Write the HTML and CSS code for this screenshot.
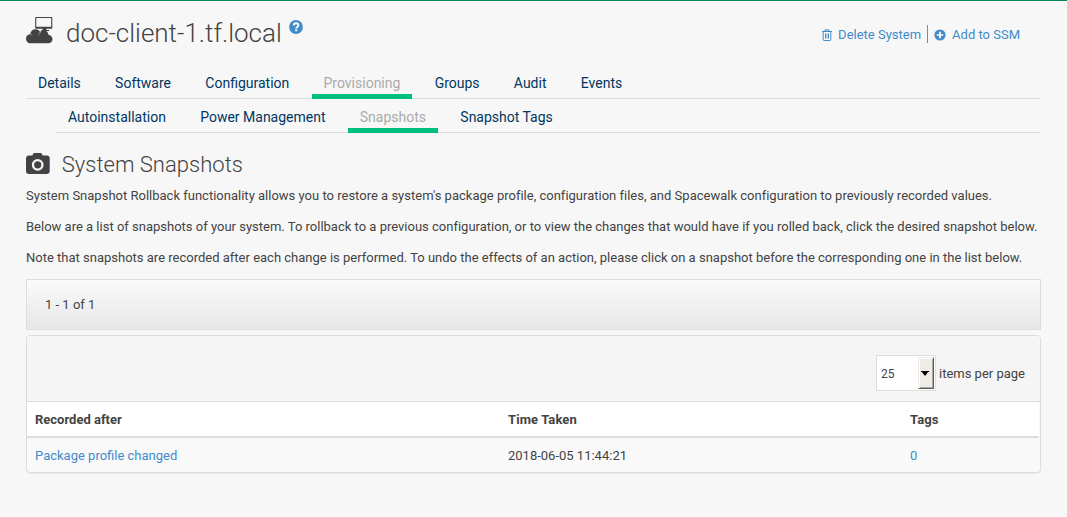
FILE: index.html
```html
<!DOCTYPE html>
<html lang="en">
<head>
<meta charset="utf-8">
<title>doc-client-1.tf.local</title>
<link rel="stylesheet" href="styles.css">
</head>
<body>
<main class="page">
  <header class="head">
    <svg class="system-icon" width="27" height="27" viewBox="0 0 27 27" fill="#434343"><path fill-rule="evenodd" d="M10 0h15.500q.8 0 .8 1v9.800q0 1-.8 1h-5v1.700h-4v-1.700H10q-.8 0-.8-1V1q0-1 .8-1zm.3 1v8.700h14.900V1z"/><path d="M14.500 13h8.500v1h-7z"/><path d="M5 26.300C1.500 26.300 0 24 0 21.500s2-4.300 4.200-4.200c.3-3.100 2.600-5 5.200-5 2.300 0 3.900 1.100 4.700 2.700 1-1 2.300-1.500 3.700-1.500 3 0 4.600 2 4.600 4.300 2.300.3 4.100 2 4.100 4.500 0 2.300-1.600 4-4.500 4z"/><path d="M4.200 17.300l2.200.8M12.600 18.500c.2-1.700.7-2.800 1.600-3.600l.8 1.400" fill="none" stroke="#999" stroke-width=".8"/></svg>
    <h1 class="title">doc-client-1.tf.local</h1>
    <svg class="help" width="14" height="14" viewBox="0 0 14 14"><circle cx="7" cy="7" r="6.900" fill="#428bca"/><path d="M4.700 5.400C4.800 3.900 5.700 3.200 7 3.200c1.400 0 2.400.8 2.400 2 0 1.700-2.200 1.700-2.200 3.300" fill="none" stroke="#fff" stroke-width="1.900"/><path d="M6.200 9.400h2v1.900h-2z" fill="#fff"/></svg>
    <nav class="actions">
      <a class="action delete"><svg width="10" height="12" viewBox="0 0 10 12" fill="none" stroke="#428bca"><path d="M0 2.500h10M3 2.300V.9h4v1.400M1.200 2.500v8q0 1 1 1h5.600q1 0 1-1v-8M3.500 4.500v5M6.500 4.500v5"/><path d="M5 4.500v5" stroke-width=".7"/></svg><span>Delete System</span></a>
      <a class="action add"><svg width="12" height="12" viewBox="0 0 12 12"><circle cx="6" cy="6" r="5.600" fill="#428bca"/><path d="M6 2.800v6.400M2.800 6h6.400" stroke="#fff" stroke-width="1.700"/></svg><span>Add to SSM</span></a>
    </nav>
  </header>
  <nav class="tabs">
    <a class="tab">Details</a><a class="tab">Software</a><a class="tab">Configuration</a><a class="tab active">Provisioning</a><a class="tab">Groups</a><a class="tab">Audit</a><a class="tab">Events</a>
  </nav>
  <nav class="tabs sub">
    <a class="tab">Autoinstallation</a><a class="tab">Power Management</a><a class="tab active">Snapshots</a><a class="tab">Snapshot Tags</a>
  </nav>
  <div class="section">
    <svg width="24" height="21" viewBox="0 0 24 21"><path fill="#434343" fill-rule="evenodd" d="M3 2.500h3.300l.7-1.600Q7.400 0 8.500 0h6q1.100 0 1.500.9l.7 1.600h4q3 0 3 3V18q0 3-3 3H3q-3 0-3-3V5.500q0-3 3-3zM11.700 5.900a5.900 5.900 0 1 0 0 11.800 5.900 5.900 0 1 0 0-11.800zm0 2.300a3.600 3.600 0 1 1 0 7.200 3.600 3.600 0 1 1 0-7.200z"/></svg>
    <h2 class="subtitle">System Snapshots</h2>
  </div>
  <p class="text wide">System Snapshot Rollback functionality allows you to restore a system's package profile, configuration files, and Spacewalk configuration to previously recorded values.</p>
  <p class="text">Below are a list of snapshots of your system. To rollback to a previous configuration, or to view the changes that would have if you rolled back, click the desired snapshot below.</p>
  <p class="text">Note that snapshots are recorded after each change is performed. To undo the effects of an action, please click on a snapshot before the corresponding one in the list below.</p>
  <div class="summary">1 - 1 of 1</div>
  <section class="panel">
    <div class="toolbar">
      <div class="select"><span class="value">25</span><span class="drop"><svg width="8" height="5" viewBox="0 0 8 5"><path d="M0 0h8v1H7L4.500 4.500h-1L1 1H0z"/></svg></span></div>
      <span class="per-page">items per page</span>
    </div>
    <div class="row header"><span>Recorded after</span><span class="taken">Time Taken</span><span class="taken">Tags</span></div>
    <div class="row data"><a>Package profile changed</a><span>2018-06-05 11:44:21</span><a>0</a></div>
  </section>
</main>
</body>
</html>
```
FILE: styles.css
```css
* { box-sizing: border-box; }
body { margin: 0; height: 517px; overflow: hidden; background: #f7f7f7; border-top: 1px solid #00865b; color: #434343; font: 13px/20px Roboto, "Liberation Sans", sans-serif; }
svg { display: block; flex: none; }
h1, h2, p { margin: 0; white-space: nowrap; }
.page { padding: 0 26px; }
.head { display: flex; height: 67px; align-items: flex-start; }
.system-icon { margin-top: 16px; }
.title { margin: 16px 0 0 13px; width: 215px; font-size: 26px; line-height: 32px; font-weight: 300; letter-spacing: -.01px; }
.help { margin: 19px 0 0 8px; }
.actions { display: flex; margin: 24px 21px 0 auto; color: #428bca; }
.action { display: flex; align-items: center; height: 18px; padding-top: 1px; white-space: nowrap; }
.delete { gap: 6px; padding-right: 6px; border-right: 1px solid #888; }
.add { gap: 6px; padding-left: 6px; }
.action span { padding-top: 1px; }
.tabs { display: flex; height: 31px; border-bottom: 1px solid #ddd; color: #00365f; font-size: 14px; }
.tab { height: 31px; padding: 5px 12px 0; line-height: 20px; margin-right: 10.270px; white-space: nowrap; }
.active { color: #aaa; border-bottom: 5px solid #00c081; }
.sub { height: 34px; margin-left: 30px; }
.sub .tab { height: 34px; padding-top: 8px; }
.section { display: flex; height: 53px; padding-top: 20px; gap: 11.700px; }
.subtitle { font-size: 22px; line-height: 24px; font-weight: 300; letter-spacing: .02px; }
.text { height: 31px; letter-spacing: .002px; }
.text.wide { letter-spacing: .005px; }
.summary { height: 51px; margin: 0; padding: 15px 18px; border: 1px solid #ddd; background: linear-gradient(#fafafa, #e7e7e7); }
.panel { height: 138px; margin-top: 5px; border: 1px solid #ddd; border-radius: 4px; background: #f9f9f9; box-shadow: 0 1px 1px rgba(0,0,0,.05); overflow: hidden; }
.toolbar { display: flex; justify-content: flex-end; align-items: center; gap: 3px; height: 66px; padding: 9px 15px 0 0; background: #f5f5f5; border-bottom: 1px solid #ddd; }
.select { display: flex; justify-content: space-between; align-items: center; width: 60px; height: 36px; padding: 0 1px 0 4px; border: 1px solid #ddd; background: #fff; font-size: 12px; }
.value, .per-page { padding-top: 2px; }
.drop { display: flex; align-items: center; justify-content: center; width: 16px; height: 32px; padding-right: 1px; background: #efebe7; border: 1px solid; border-color: #efebe7 #5c5a57 #5c5a57 #efebe7; box-shadow: inset 1px 1px #fff, inset -1px -1px #aaa69f; }
.row { display: grid; grid-template-columns: 473px 402px 1fr; padding: 8px 8px 0; height: 36px; }
.header { background: #fff; font-weight: 700; border-bottom: 2px solid #ddd; margin-right: 1px; }
.taken { letter-spacing: .1px; }
.data a { color: #428bca; }
```
